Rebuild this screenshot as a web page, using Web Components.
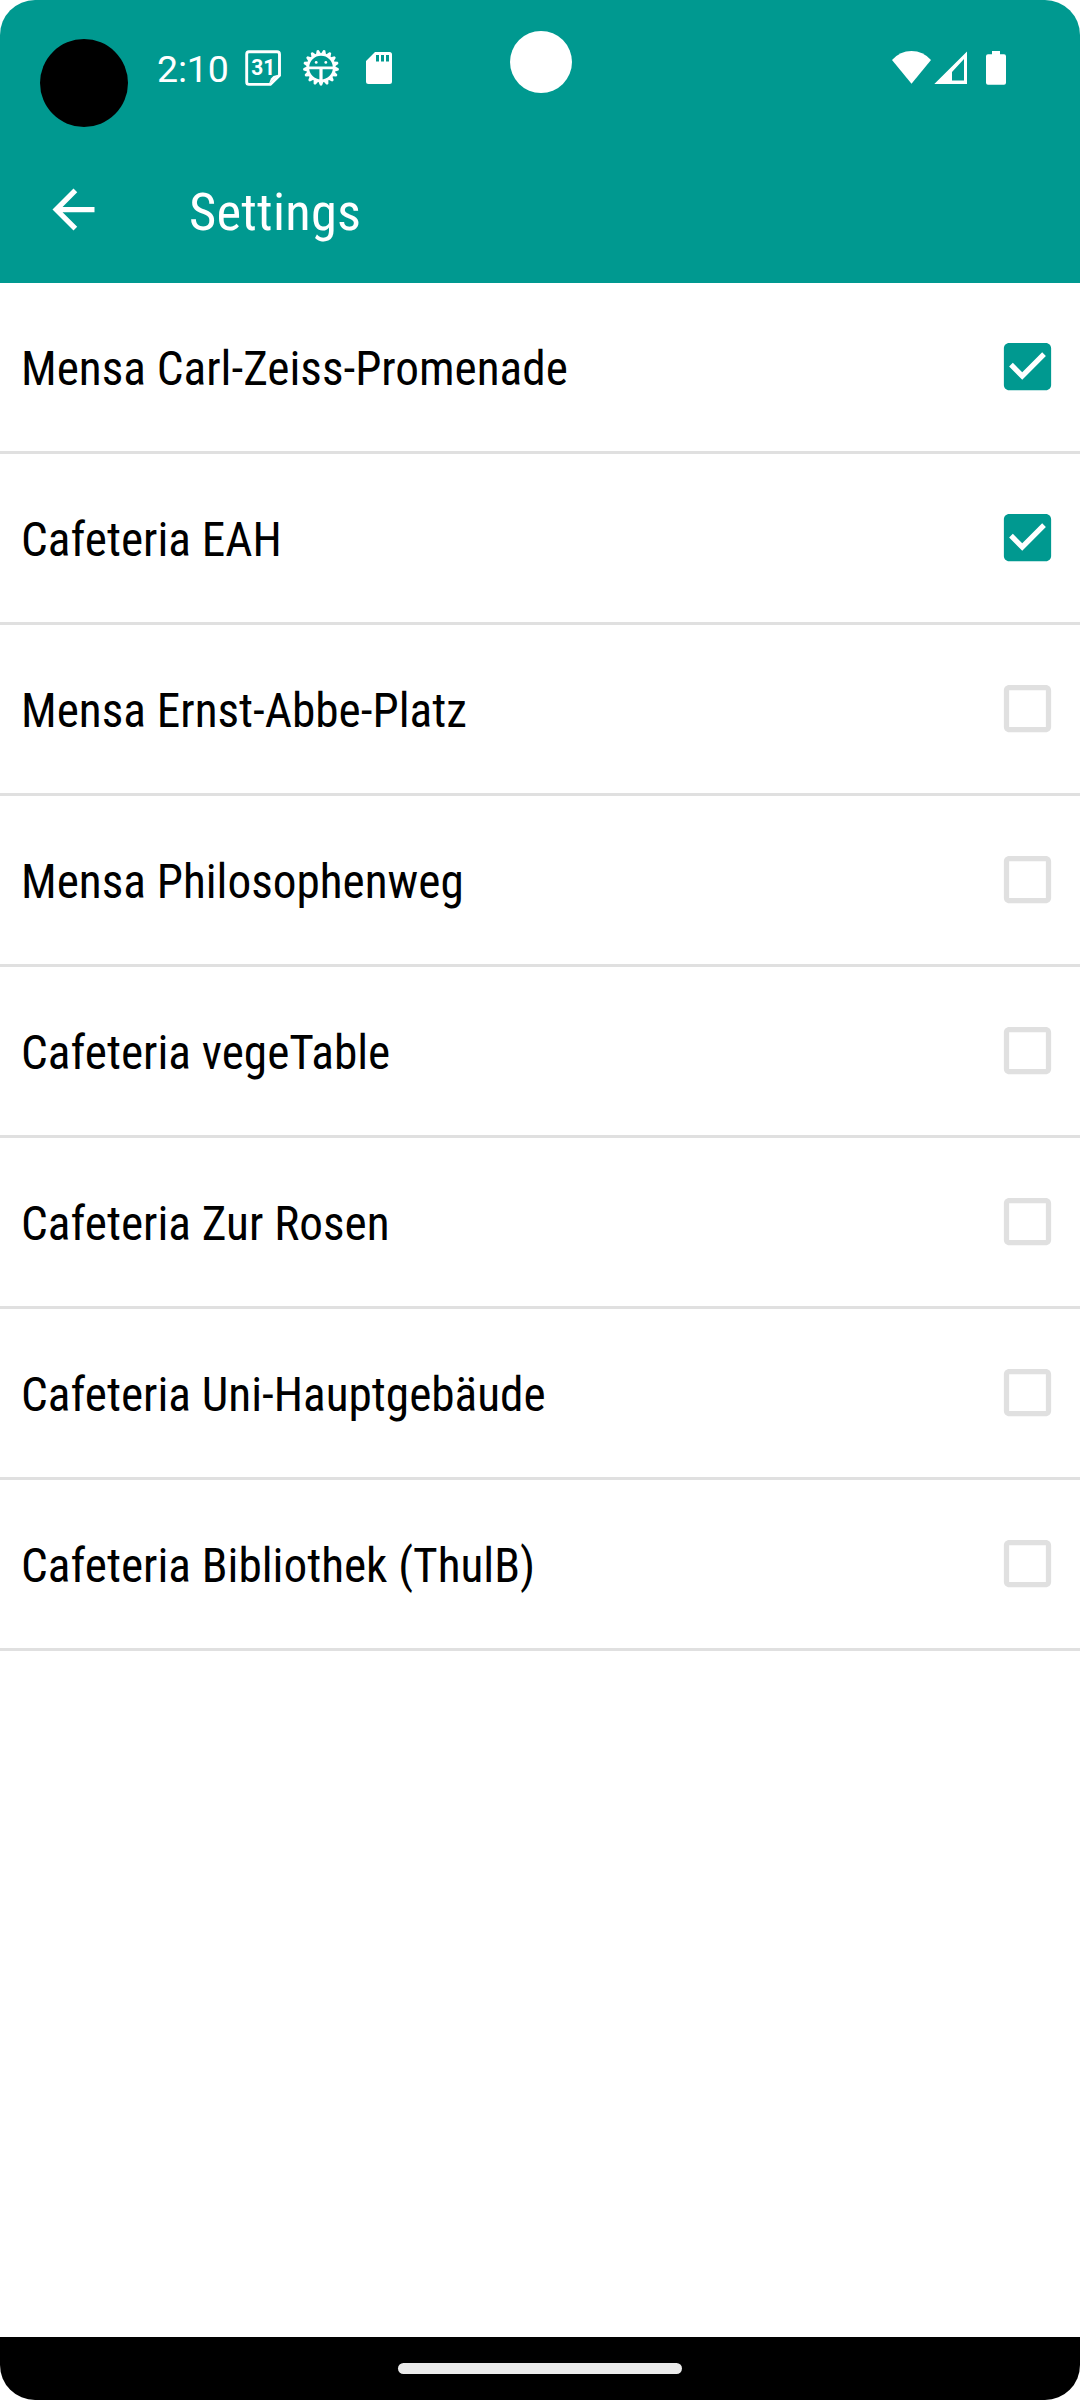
<!DOCTYPE html>
<html lang="en">
<head>
<meta charset="utf-8">
<title>Settings</title>
<style>
  html { background: #fff; }
  body { margin: 0; font-family: "Roboto Condensed", Roboto, sans-serif; font-stretch: 75%; }
</style>
</head>
<body>
<settings-screen>
  <status-bar slot="status" time="2:10"></status-bar>
  <app-bar slot="bar">Settings</app-bar>
  <setting-row checked>Mensa Carl-Zeiss-Promenade</setting-row>
  <setting-row checked>Cafeteria EAH</setting-row>
  <setting-row>Mensa Ernst-Abbe-Platz</setting-row>
  <setting-row>Mensa Philosophenweg</setting-row>
  <setting-row>Cafeteria vegeTable</setting-row>
  <setting-row>Cafeteria Zur Rosen</setting-row>
  <setting-row>Cafeteria Uni-Hauptgebäude</setting-row>
  <setting-row>Cafeteria Bibliothek (ThulB)</setting-row>
  <nav-bar slot="nav"></nav-bar>
</settings-screen>
<script>
class Base extends HTMLElement {
  constructor() {
    super();
    this.attachShadow({ mode: 'open' }).innerHTML = this.view();
  }
}

customElements.define('settings-screen', class extends Base {
  view() {
    return `<style>
      :host { display: flex; flex-direction: column; width: 1080px; height: 2400px;
        overflow: hidden; border-radius: 35px; background: #fff; }
      main { flex: 1; display: flex; flex-direction: column; }
    </style>
    <slot name="status"></slot><slot name="bar"></slot>
    <main><slot></slot></main>
    <slot name="nav"></slot>`;
  }
});

customElements.define('status-bar', class extends Base {
  view() {
    const rays = Array.from({ length: 17 }, (_, i) =>
      `<path d="M-2.7 13.5L-1.1 17.6Q0 18.4 1.1 17.6L2.7 13.5Z" transform="rotate(${i * 360 / 17})"/>`).join('');
    return `<style>
      :host { display: flex; justify-content: space-between; position: relative; height: 136px;
        box-sizing: border-box; padding: 49px 73px 0 157px; background: #009990; color: #fff; }
      div { display: flex; height: 38px; align-items: center; }
      svg { display: block; fill: currentColor; flex: none; }
      time { font: 400 37.5px/40px Roboto, sans-serif; font-stretch: 100%; width: 87px; height: 38px; letter-spacing: -0.2px; }
      .dot { position: absolute; border-radius: 50%; }
      .black { left: 40px; top: 39px; width: 88px; height: 88px; background: #000; }
      .white { left: 509.5px; top: 31px; width: 62px; height: 62px; background: #fff; }
    </style>
    <span class="dot black"></span><span class="dot white"></span>
    <div><time>${this.getAttribute('time')}</time>
      <svg width="38" height="38" viewBox="244 49 38 38">
        <path d="M249 51.7H277Q279.5 51.7 279.5 54.2V75.4L270.4 84.4H249Q246.7 84.4 246.7 82V54.2Q246.7 51.7 249 51.7Z" fill="none" stroke="currentColor" stroke-width="2.9"/>
        <path d="M269 83.5L271 78.5L273.5 76L279 74.5Z"/>
        <text x="251.3" y="75" font-family="Roboto" font-weight="700" font-size="22" style="font-stretch:100%" textLength="24" lengthAdjust="spacingAndGlyphs">31</text>
      </svg>
      <svg style="margin-left:20px" width="38" height="38" viewBox="-19 -18.7 38 38">
        ${rays}
        <circle r="13.2" fill="none" stroke="currentColor" stroke-width="2.7"/>
        <path d="M-13-1.3H13V1.5H1.6V13H-1.6V1.5H-13Z"/>
        <circle cx="-4.8" cy="-5.3" r="1.4"/><circle cx="4.8" cy="-5.3" r="1.4"/>
      </svg>
      <svg style="margin-left:26px" width="26" height="38" viewBox="366 49 26 38">
        <path fill-rule="evenodd" d="M375 52H389.5Q392 52 392 54.5V81.5Q392 84 389.5 84H368.5Q366 84 366 81.5V61ZM376 55V61.5H379V55ZM381 55V61.5H384V55ZM386 55V61.5H389V55Z"/>
      </svg>
    </div>
    <div>
      <svg width="115" height="38" viewBox="892 49 115 38">
        <path d="M892 60Q900 51 911.5 51T931 60L911.5 83.7Z"/>
        <path fill-rule="evenodd" d="M967 51.5V84H934.3ZM964 59L952 72V80.5H964Z"/>
        <path d="M992 51H1000V54.3H1004Q1006 54.3 1006 56.3V82.8Q1006 84.8 1004 84.8H988Q986 84.8 986 82.8V56.3Q986 54.3 988 54.3H992Z"/>
      </svg>
    </div>`;
  }
});

customElements.define('app-bar', class extends Base {
  view() {
    return `<style>
      :host { display: flex; align-items: center; height: 147px; box-sizing: border-box;
        padding: 0 42px; background: #009990; color: #fff; font-size: 52.5px; line-height: 62px; }
      svg { display: block; width: 63px; height: 63px; fill: currentColor; }
      span { padding: 4px 0 0 84px; white-space: nowrap; letter-spacing: 0.25px; }
    </style>
    <svg viewBox="0 0 24 24"><path d="M20 11H7.83l5.59-5.59L12 4l-8 8 8 8 1.41-1.41L7.83 13H20v-2z"/></svg>
    <span><slot></slot></span>`;
  }
});

customElements.define('setting-row', class extends Base {
  view() {
    const d = this.hasAttribute('checked')
      ? 'M19 3H5c-1.11 0-2 .9-2 2v14c0 1.1.89 2 2 2h14c1.11 0 2-.9 2-2V5c0-1.1-.89-2-2-2zm-9 14l-5-5 1.41-1.41L10 14.17l7.59-7.59L19 8l-9 9z'
      : 'M19 5v14H5V5h14m0-2H5c-1.1 0-2 .9-2 2v14c0 1.1.9 2 2 2h14c1.1 0 2-.9 2-2V5c0-1.1-.9-2-2-2z';
    return `<style>
      :host { display: flex; align-items: center; justify-content: space-between; height: 171px;
        box-sizing: border-box; padding: 0 21px; border-bottom: 3px solid #e0e0e0;
        color: #000; font-size: 47.25px; line-height: 56px; white-space: nowrap; }
      svg { display: block; width: 63px; height: 63px; margin-bottom: 1px; fill: #e0e0e0; }
      :host([checked]) svg { fill: #009990; }
      span { padding-top: 3px; }
    </style>
    <span><slot></slot></span>
    <svg viewBox="0 0 24 24"><path d="${d}"/></svg>`;
  }
});

customElements.define('nav-bar', class extends Base {
  view() {
    return `<style>
      :host { display: flex; align-items: center; justify-content: center; height: 63px; background: #000; }
      i { width: 284px; height: 11px; border-radius: 5.5px; background: #ebebeb; }
    </style><i></i>`;
  }
});
</script>
</body>
</html>
